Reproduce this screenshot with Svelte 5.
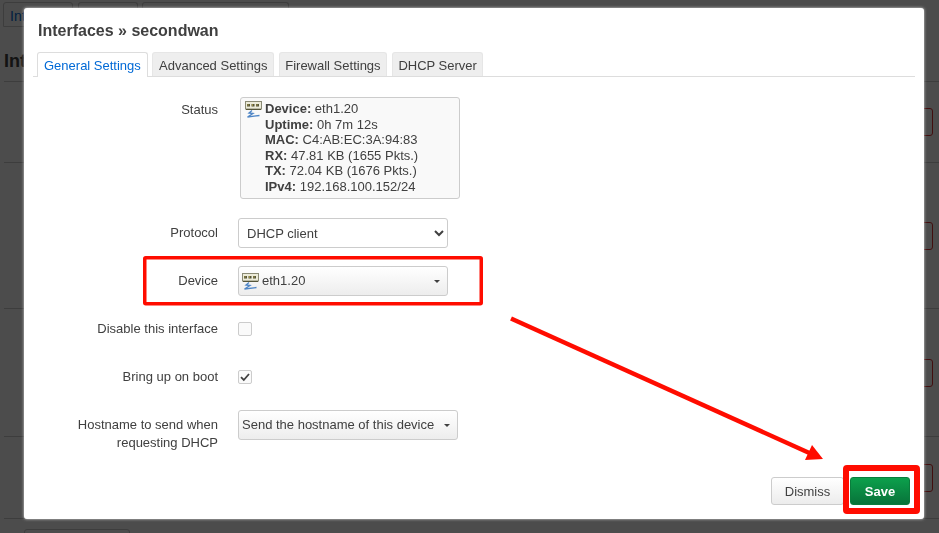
<script lang="ts">
  const tabs = ['General Settings', 'Advanced Settings', 'Firewall Settings', 'DHCP Server'];
  const status = [
    ['Device:', 'eth1.20'],
    ['Uptime:', '0h 7m 12s'],
    ['MAC:', 'C4:AB:EC:3A:94:83'],
    ['RX:', '47.81 KB (1655 Pkts.)'],
    ['TX:', '72.04 KB (1676 Pkts.)'],
    ['IPv4:', '192.168.100.152/24']
  ];
  const pageRows = [81, 146, 128, 82];
</script>

{#snippet netIcon()}
  <svg class="net-icon" width="17" height="17" viewBox="0 0 17 17" aria-hidden="true">
    <rect x="0.5" y="0.5" width="16" height="7.5" fill="#ecebd8" stroke="#8a8a74" />
    <path d="M2 3h3v2.5H2zM6.5 3h3v2.5h-3zM11 3h3v2.5h-3z" fill="#55553a" />
    <path d="M2.5 4h1M7 4h1M11.5 4h1" stroke="#e0c850" />
    <path d="M1 8.5h15" stroke="#55553a" />
    <path d="M7 9.5 4 12l4 .5-5.5 3.5 12-1.5" fill="none" stroke="#4f86c6" stroke-width="1.3" />
  </svg>
{/snippet}

<div class="page">
  <div class="page-tabs">
    <div class="page-tab">Int</div>
    <div class="page-tab"></div>
    <div class="page-tab"></div>
  </div>
  <h2>Int</h2>
  {#each pageRows as h}
    <div class="page-row" style="height: {h}px"><span class="page-btn"></span></div>
  {/each}
  <div class="page-add"></div>
</div>

<div class="overlay">
  <div class="modal">
    <h4>Interfaces » secondwan</h4>
    <ul class="tabs">
      {#each tabs as t, i}
        <li class:active={i === 0}>{t}</li>
      {/each}
    </ul>

    <div class="form">
      <div class="label status-label">Status</div>
      <div class="status">
        {@render netIcon()}
        <div>
          {#each status as [k, v]}
            <div><strong>{k}</strong> {v}</div>
          {/each}
        </div>
      </div>

      <div class="label">Protocol</div>
      <select class="native">
        <option>DHCP client</option>
      </select>

      <div class="label">Device</div>
      <div class="drop device">
        {@render netIcon()}
        <span>eth1.20</span>
        <i class="caret"></i>
      </div>

      <div class="label">Disable this interface</div>
      <div class="check-cell"><span class="check"></span></div>

      <div class="label">Bring up on boot</div>
      <div class="check-cell">
        <span class="check">
          <svg width="12" height="12" viewBox="0 0 12 12" aria-hidden="true">
            <path d="M2 6.2 4.8 9 10 3" fill="none" stroke="#404040" stroke-width="1.8" />
          </svg>
        </span>
      </div>

      <div class="label">Hostname to send when requesting DHCP</div>
      <div class="drop hostname">
        <span>Send the hostname of this device</span>
        <i class="caret"></i>
      </div>
    </div>

    <div class="footer">
      <button class="btn">Dismiss</button>
      <button class="btn save">Save</button>
    </div>
  </div>
</div>

<svg class="annotations" width="939" height="533" viewBox="0 0 939 533" aria-hidden="true">
  <rect x="144.75" y="257.75" width="336.5" height="46" rx="1" fill="none" stroke="#ff0c00" stroke-width="3.5" />
  <rect x="846" y="468" width="71" height="43" rx="1" fill="none" stroke="#ff0c00" stroke-width="6" />
  <path d="M511 318.5 816 456" stroke="#ff0c00" stroke-width="4.5" fill="none" />
  <path d="M823 459 812 445 805 460Z" fill="#ff0c00" />
</svg>

<style>
  :global(body) {
    margin: 0;
    width: 939px;
    height: 533px;
    overflow: hidden;
    background: #fff;
    font-family: "Liberation Sans", Arial, sans-serif;
    font-size: 13px;
    color: #404040;
  }
  .page {
    padding: 2px 0 0 3px;
    height: 531px;
    overflow: hidden;
  }
  .page-tabs {
    display: flex;
    gap: 4.5px;
    height: 25px;
    box-sizing: border-box;
  }
  .page-tab {
    box-sizing: border-box;
    height: 25px;
    padding: 5px 6px;
    border: 1px solid #ccc;
    border-bottom: 0;
    border-radius: 3px 3px 0 0;
    font-size: 14px;
    color: #0069d6;
  }
  .page-tab:nth-child(1) {
    width: 70px;
    border-bottom: 1px solid #ccc;
  }
  .page-tab:nth-child(2) {
    width: 60px;
  }
  .page-tab:nth-child(3) {
    width: 147px;
  }
  h2 {
    margin: 0 0 0 1px;
    height: 55px;
    padding-top: 24px;
    box-sizing: border-box;
    border-bottom: 1px solid #ccc;
    font-size: 18px;
    line-height: 21px;
    color: #404040;
  }
  .page-row {
    box-sizing: border-box;
    border-bottom: 1px solid #ccc;
    margin-left: 1px;
    padding-right: 6px;
    display: flex;
    justify-content: flex-end;
    align-items: center;
  }
  .page-btn {
    width: 60px;
    height: 28px;
    box-sizing: border-box;
    border: 1px solid #d33;
    border-radius: 3px;
  }
  .page-add {
    width: 104px;
    height: 14px;
    margin: 10px 0 0 21px;
    border: 1px solid #ccc;
    border-radius: 3px;
  }
  .overlay {
    position: fixed;
    inset: 0;
    background: rgba(0, 0, 0, 0.7);
    padding: 8px 15px 14px 24px;
    box-sizing: border-box;
  }
  .modal {
    height: 100%;
    box-sizing: border-box;
    background: #fff;
    border-radius: 3px;
    box-shadow: 0 0 3px rgba(255, 255, 255, 0.8);
    padding: 13px 9px 14px 9px;
    display: flex;
    flex-direction: column;
  }
  h4 {
    margin: 0 0 12px 5px;
    font-size: 16px;
    line-height: 19px;
    font-weight: bold;
    color: #404040;
  }
  .tabs {
    list-style: none;
    margin: 0;
    padding: 0 0 0 4px;
    display: flex;
    gap: 4.6px;
    height: 24px;
    border-bottom: 1px solid #ddd;
  }
  .tabs li {
    padding: 0 5.6px;
    height: 24px;
    line-height: 26px;
    box-sizing: border-box;
    background: #eee;
    border: 1px solid #e6e6e6;
    border-bottom: 0;
    border-radius: 3px 3px 0 0;
    color: #404040;
  }
  .tabs li.active {
    background: #fff;
    color: #0069d6;
    height: 25px;
    padding: 0 6px;
    border-color: #ddd;
  }
  .form {
    margin: 20px 0 0 5px;
    display: grid;
    grid-template-columns: 180px 1fr;
    column-gap: 20px;
    row-gap: 18px;
    grid-auto-rows: minmax(30px, auto);
    line-height: 18px;
  }
  .label {
    text-align: right;
    padding-top: 6px;
  }
  .status-label {
    padding-top: 4px;
  }
  .status {
    margin: 0 0 1px 2px;
    width: 220px;
    height: 102px;
    box-sizing: border-box;
    border: 1px solid #ccc;
    border-radius: 3px;
    background: #f9f9f9;
    padding: 3px 4px;
    display: flex;
    gap: 3px;
    line-height: 15.6px;
  }
  .net-icon {
    flex: none;
  }
  .native {
    width: 210px;
    height: 30px;
    box-sizing: border-box;
    border: 1px solid #ccc;
    border-radius: 3px;
    background: #fff;
    color: #404040;
    font: 13px "Liberation Sans", Arial, sans-serif;
    padding: 0 4px;
  }
  .drop {
    height: 30px;
    box-sizing: border-box;
    border: 1px solid #ccc;
    border-radius: 3px;
    background: linear-gradient(#fff, #ededed);
    display: flex;
    align-items: center;
    padding: 0 7px 0 3px;
    gap: 3px;
  }
  .device {
    width: 210px;
  }
  .hostname {
    width: 220px;
  }
  .caret {
    margin-left: auto;
    width: 0;
    height: 0;
    border: 3px solid transparent;
    border-top-color: #404040;
    border-bottom: 0;
  }
  .check-cell {
    display: flex;
    align-items: center;
  }
  .check {
    width: 14px;
    height: 14px;
    box-sizing: border-box;
    border: 1px solid #ccc;
    border-radius: 2px;
    background: #fafafa;
    display: flex;
    align-items: center;
    justify-content: center;
  }
  .footer {
    margin-top: auto;
    display: flex;
    justify-content: flex-end;
    gap: 6px;
    padding-right: 5px;
  }
  .btn {
    height: 28px;
    width: 73px;
    box-sizing: border-box;
    border: 1px solid #ccc;
    border-radius: 3px;
    background: linear-gradient(#fff, #ececec);
    color: #404040;
    font: 13px "Liberation Sans", Arial, sans-serif;
  }
  .btn.save {
    width: 60px;
    border-color: #0a7d3c;
    background: linear-gradient(#0ca04c, #08733a);
    color: #fff;
    font-weight: bold;
  }
  .annotations {
    position: fixed;
    left: 0;
    top: 0;
    pointer-events: none;
  }
</style>
